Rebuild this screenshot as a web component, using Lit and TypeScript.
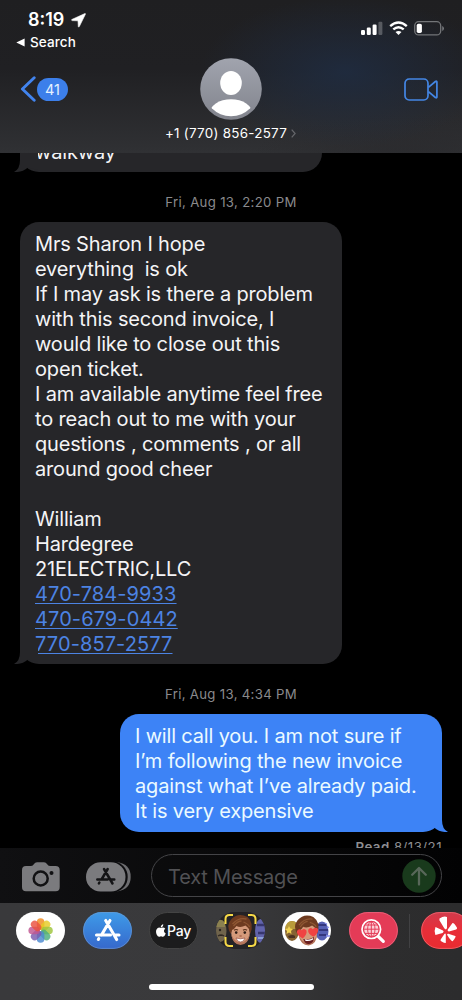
import { LitElement, html, svg, css } from "lit";
import { customElement, property } from "lit/decorators.js";

type Line = { text: string; link?: boolean };

@customElement("status-header")
class StatusHeader extends LitElement {
  static styles = css`
    :host { display: block; height: 153px; color: #fff; overflow: hidden;
      background:
        radial-gradient(ellipse 145px 75px at 345px 72px, rgba(31, 46, 70, .75), rgba(31, 46, 70, 0)),
        radial-gradient(ellipse 150px 50px at 400px 160px, rgba(40, 40, 43, .7), rgba(40, 40, 43, 0)),
        linear-gradient(180deg, #1f1f21 0, #202023 45%, #303134 100%); }
    .status { display: flex; justify-content: space-between; height: 32px; padding: 8px 17px 0 28px; box-sizing: border-box; }
    .time { display: flex; align-items: center; gap: 7px; font-size: 18px; font-weight: 600; line-height: 24px; letter-spacing: 0; }
    .right { display: flex; align-items: center; gap: 6px; padding-top: 16px; height: 8px; }
    .back { display: flex; align-items: center; gap: 5px; height: 20px; padding-left: 16px; font-size: 13.5px; font-weight: 500; letter-spacing: .1px; }
    .nav { display: grid; grid-template-columns: 90px 1fr 90px; height: 62px; margin-top: 6px; align-items: center; justify-items: center; }
    .unread { display: flex; align-items: center; gap: 1px; justify-self: start; padding-left: 20px; }
    .count { width: 31px; height: 23px; border-radius: 12px; background: #3c7fea; font-size: 14.5px; line-height: 24px; text-align: center; color: #e4f2ff; }
    .video { justify-self: end; padding-right: 24px; }
    .who { display: flex; align-items: center; justify-content: center; gap: 4px; height: 20px; margin-top: 3px; padding-right: 1px; font-size: 13.4px; letter-spacing: .28px; }
    svg { display: block; }
  `;
  render() {
    return html`
      <div class="status">
        <div class="time">8:19
          <svg width="15" height="15" viewBox="0 0 15 15"><path d="M14 .5 .8 6.5Q.2 7.3 1.2 7.6L7 7.8 7.3 13.5Q7.6 14.6 8.3 13.6L14.4 1.2Q14.6.4 14 .5Z" fill="#fff" stroke="#fff" stroke-width=".6"/></svg>
        </div>
        <div class="right">
          <svg width="22" height="14" viewBox="0 0 22 14"><g fill="#fff"><rect x="0" y="9" width="4" height="5" rx="1.2"/><rect x="5.8" y="6.5" width="4" height="7.5" rx="1.2"/><rect x="11.6" y="3.5" width="4" height="10.5" rx="1.2"/><rect x="17.4" y=".8" width="4" height="13.2" rx="1.2" opacity=".25"/></g></svg>
          <svg width="19" height="14" viewBox="0 0 19 14"><g fill="none" stroke="#fff" stroke-width="2.4"><path d="M1.2 5.2Q9.5-2 17.8 5.2"/><path d="M4.3 8.4Q9.5 4 14.7 8.4"/></g><path d="M6.5 11Q9.5 8.8 12.5 11L9.5 14Z" fill="#fff"/></svg>
          <svg width="31" height="15" viewBox="0 0 31 15"><rect x=".7" y=".7" width="26" height="13.2" rx="4" fill="none" stroke="#737578" stroke-width="1.3"/><rect x="2.7" y="2.7" width="5.2" height="9.2" rx="1.7" fill="#fff"/><path d="M28.3 5v5q1.6-.6 1.6-2.5T28.3 5Z" fill="#808286"/></svg>
        </div>
      </div>
      <div class="back"><svg width="9" height="9" viewBox="0 0 9 9"><path d="M.3 4.5 8.6.5v8Z" fill="#fff"/></svg>Search</div>
      <div class="nav">
        <div class="unread">
          <svg width="16" height="26" viewBox="0 0 16 26"><path d="M14.2 1.7 2.4 13 14.2 24.3" fill="none" stroke="#4284ee" stroke-width="2.9" stroke-linecap="round" stroke-linejoin="round"/></svg>
          <div class="count">41</div>
        </div>
        <svg width="62" height="62" viewBox="0 0 62 62">
          <defs><linearGradient id="g" x2="0" y2="1"><stop stop-color="#a1a4ae"/><stop offset="1" stop-color="#82848d"/></linearGradient><clipPath id="c"><circle cx="31" cy="31" r="27.2"/></clipPath></defs>
          <circle cx="31" cy="31" r="30.8" fill="url(#g)"/>
          <ellipse cx="31" cy="25" rx="10.8" ry="12" fill="#fff"/><ellipse cx="31" cy="56" rx="21.5" ry="14.8" fill="#fff" clip-path="url(#c)"/>
        </svg>
        <svg class="video" width="34" height="23" viewBox="0 0 34 23"><g fill="none" stroke="#4487e5" stroke-width="1.7" stroke-linejoin="round"><rect x="1" y="1" width="23" height="21" rx="4.2"/><path d="M24.4 9.3 31.4 3.5Q32.9 2.7 32.9 4v15q0 1.3-1.5.5L24.4 13.7"/></g></svg>
      </div>
      <div class="who">+1 (770) 856-2577<svg width="5" height="9" viewBox="0 0 5 9"><path d="m.7.7 3.4 3.8L.7 8.3" fill="none" stroke="#66676b" stroke-width="1.2"/></svg></div>
    `;
  }
}

@customElement("chat-bubble")
class ChatBubble extends LitElement {
  @property({ attribute: false }) lines: Line[] = [];
  @property({ type: Boolean, reflect: true }) sent = false;
  static styles = css`
    :host { display: block; position: relative; box-sizing: border-box; width: 322px; margin-left: 20px; padding: 10px 15px 7px; border-radius: 19px; background: #262629; color: #f4f4f6; font-size: 20px; line-height: 25px; }
    :host([sent]) { margin-left: 120px; padding-bottom: 8px; background: #3d83f6; color: #ebfaff; }
    .line { height: 25px; white-space: pre; letter-spacing: -.17px; }
    .link { color: #4c83e3; letter-spacing: .1px; text-decoration: underline; text-decoration-thickness: 1.4px; text-underline-offset: 2px; text-decoration-skip-ink: none; }
    .tail { position: absolute; left: -6px; bottom: 0; fill: #262629; }
    :host([sent]) .tail { left: auto; right: -6px; fill: #3d83f6; transform: scaleX(-1); }
  `;
  render() {
    return html`<svg class="tail" width="26" height="22" viewBox="0 0 26 22"><path d="M6 0V10Q6 19 0 22 8 22.6 14 17.5L24 20V0Z"/></svg>
    ${this.lines.map(l => html`<div class="line"><span class=${l.link ? "link" : ""}>${l.text}</span></div>`)}`;
  }
}

@customElement("compose-bar")
class ComposeBar extends LitElement {
  static styles = css`
    :host { display: flex; align-items: center; height: 55px; box-sizing: border-box; padding: 0 20px 0 22px; background: linear-gradient(90deg, #101012, #09090a 50%, #020203); }
    svg { display: block; }
    .camera, .cards { margin-top: 2px; }
    .cards { margin-left: 26px; }
    .field { display: flex; align-items: center; justify-content: space-between; box-sizing: border-box; width: 291px; height: 43px; margin-left: auto; padding: 2px 5px 0 16px; border: 1.3px solid #444447; border-radius: 22px; color: #515154; font-size: 20px; letter-spacing: -.2px; }
    .send { margin-top: -1px; }
  `;
  render() {
    return html`
      <svg class="camera" width="38" height="30" viewBox="0 0 38 30"><path d="M4 4h5q2 0 3-2 1-1.8 3-1.8h7q2 0 3 1.8 1 2 3 2h5.5Q37.7 4 37.7 8v17q0 4.3-4 4.3H4Q0 29.3 0 25V8Q0 4 4 4Z" fill="#7b7b7e"/><circle cx="18.7" cy="16.5" r="7" fill="none" stroke="#111113" stroke-width="2.5"/><circle cx="29.5" cy="11" r="2" fill="#111113"/></svg>
      <svg class="cards" width="45" height="30" viewBox="0 0 45 30"><path d="M31 .3Q44.7 2 44.7 14.8T31 29.5Z" fill="#6d6d70"/><rect x="-.8" y="-.8" width="42.5" height="31.5" rx="15.7" fill="#0d0d0f"/><rect x="0" y=".3" width="39.5" height="29.3" rx="14.6" fill="#7b7b7e"/><g stroke="#141416" stroke-width="2.5" stroke-linecap="round" fill="none"><path d="m18 7 8.5 14.5M21.7 7l-6.2 10.5M11.3 17.5h10.4M25 17.5h3.3M13.4 20.5l-.5.9"/></g></svg>
      <div class="field"><span>Text Message</span>
        <svg class="send" width="34" height="34" viewBox="0 0 34 34"><circle cx="17" cy="17" r="16.7" fill="#193a1c"/><path d="M17 25.5V9.5M10.2 15.8 17 9l6.8 6.8" fill="none" stroke="#586759" stroke-width="2.3" stroke-linecap="round" stroke-linejoin="round"/></svg>
      </div>`;
  }
}

const petals = ["#f08b1d", "#e6cb24", "#9dc43c", "#4dae7d", "#4b89cf", "#7a5cae", "#c05590", "#ea5040"];

const face = (smile: boolean) => svg`
  <ellipse cx="0" cy="3" rx="9.3" ry="11" fill="#d59a7a"/>
  <path d="M-9.3 4Q-8 14.500 0 15 8 14.500 9.300 4 6 12.500 0 12.500T-9.300 4Z" fill="#b5745a"/>
  <path d="M-9.800 4Q-15-5-9-11-2-18 7-13 14-7 9.800 4L8.600-1Q7-3 5-4.500 0-2-4-4-6-1-8.500 0Z" fill="#6e3b20"/>
  <path d="M-8-6Q-2-13 6-11M-7-4Q-3-9 1-9M3-8Q8-6 9-3" stroke="#8f5733" stroke-width="1.3" fill="none"/>
  ${smile
    ? svg`<path d="M-6.500.200q2.200-1.500 4 0M2.500.200q2-1.500 4 0" stroke="#573019" fill="none" stroke-width="1.1"/><circle cx="-4.3" cy="2.6" r="1.3" fill="#2c1c16"/><circle cx="4.3" cy="2.6" r="1.3" fill="#2c1c16"/><path d="M-1 6h2.200" stroke="#a9644c" stroke-width="1.3"/><path d="M-4.500 8Q0 9.600 4.500 8 3.500 12 0 12T-4.500 8Z" fill="#fff" stroke="#8a3f35" stroke-width=".6"/>`
    : svg`<path d="M-5 8Q0 10 6 7 5 13.500.5 13.500T-5 8Z" fill="#6b1f20"/><path d="M-3.500 8.600Q1 10 5 8l-.5 1.700Q0 11-3 10Z" fill="#fff"/><path d="M-5.500 7.500Q-12 3-10.500-.5q2.200-3 4.700-.2Q-3-3.400-1 0-.5 4-5.500 7.500ZM5.500 6.800Q-.5 3 .8-.8q2.300-2.800 4.500 0 3-2.800 5.400.2Q11 3.500 5.500 6.800Z" fill="#f04342"/>`}`;

@customElement("app-drawer")
class AppDrawer extends LitElement {
  static styles = css`
    :host { display: block; height: 97px; overflow: hidden; background: linear-gradient(90deg, #39393b 0, #3a3a3c 50%, #2d2d2e 80%, #2c2c2d 100%); }
    .apps { display: flex; align-items: center; gap: 17.5px; height: 55px; padding-left: 16px; }
    .app { flex: none; width: 49px; height: 37px; border-radius: 18.5px; overflow: hidden; }
    .pay { display: flex; align-items: center; justify-content: center; box-sizing: border-box; gap: 1px; background: #1c1c1d; border: 1px solid #444; color: #fff; font-size: 14px; letter-spacing: -.3px; font-weight: 500; }
    .rule { flex: none; width: 1px; height: 34px; margin: 0 -6.5px; background: #414143; }
    .home { width: 165px; height: 6px; border-radius: 3px; background: #fff; margin: 26px 0 0 149px; }
    svg { display: block; }
  `;
  render() {
    return html`
      <div class="apps">
        <svg class="app" viewBox="0 0 49 37"><rect width="49" height="37" fill="#fff"/>
          ${petals.map((c, i) => svg`<rect x="20.8" y="6.3" width="7.6" height="11.6" rx="3.8" fill=${c} opacity=".82" transform="rotate(${i * 45} 24.6 18.5)"/>`)}</svg>
        <svg class="app" viewBox="0 0 49 37"><defs><linearGradient id="b" x2="0" y2="1"><stop stop-color="#3e9be8"/><stop offset="1" stop-color="#3668cc"/></linearGradient></defs><rect width="49" height="37" fill="url(#b)"/><rect x=".6" y=".6" width="47.8" height="35.8" rx="17.9" fill="none" stroke="#7499c8" stroke-opacity=".6"/><g stroke="#fff" stroke-width="3.1" stroke-linecap="round"><path d="m22.7 8.5 11 19M27 8.5 18.5 23M13.5 23h14M32.5 23H36M15.8 26.5l-.5.9"/></g></svg>
        <div class="app pay"><svg width="10" height="13" viewBox="0 0 20 25"><path d="M14.5 0q.2 3-1.7 4.800T9.500 6.300Q9.300 3.800 11 2T14.500 0ZM18.500 9q-3 1.800-2.600 5t3.600 4.300Q17 25 14 25q-1.300 0-2.500-.6-1.500-.7-3 0-1.300.6-2.300.6Q3.500 25 1.300 20.500-1 15 1 10.500 3 6.700 6.500 6.700q1.200 0 3.500 1 2-.9 3.700-1Q16.700 6.700 18.500 9Z" fill="#fff"/></svg>Pay</div>
        <svg class="app" viewBox="0 0 49 37"><rect width="49" height="37" fill="#252326"/>
          <ellipse cx="4.5" cy="19" rx="6" ry="11" fill="#70644c"/><path d="M0 10Q5 5 9 11v4H0Z" fill="#8b8150"/><circle cx="4" cy="18" r="1.2" fill="#28231f"/><path d="M2 24q3-2 6 0" stroke="#342b25" stroke-width="1.5"/>
          <ellipse cx="45" cy="19" rx="6" ry="12" fill="#6264ac"/><path d="M41 13h8M42 21h7" stroke="#37366e" stroke-width="2.5"/><path d="M42 26h7" stroke="#8ca0da" stroke-width="2"/>
          <g transform="translate(24.5 18)">${face(true)}</g>
          <path d="M9.500 12V7q0-4 4-4H17M32 3h3.500q4 0 4 4v5M9.500 25v5q0 4 4 4H17M32 34h3.500q4 0 4-4v-5" fill="none" stroke="#f5d847" stroke-width="2"/></svg>
        <svg class="app" viewBox="0 0 49 37"><rect width="49" height="37" fill="#fff"/>
          <ellipse cx="10" cy="19" rx="7" ry="10" fill="#856333"/><path d="M3 17Q4 9 10 9t8 8Z" fill="#b99b3b"/><path d="m7 14 1.300 2.500 2.700.5-2 2 .5 3-2.500-1.500L4.500 22l.5-3-2-2 2.800-.5Z" fill="#f1d251"/><path d="M6 24q5-2 7 0v2H7Z" fill="#4b3222"/>
          <ellipse cx="40" cy="19" rx="6.5" ry="9.5" fill="#5660b3"/><path d="M36 13h8M37 18h9M37 23h7" stroke="#34377e" stroke-width="1.8"/><path d="m43 11 2 1M45 16l2-1M44 24h4" stroke="#8b92ef" stroke-width="1.3"/>
          <g transform="translate(25.5 18.5) rotate(-5)">${face(false)}</g></svg>
        <svg class="app" viewBox="0 0 49 37"><rect width="49" height="37" fill="#e43b57"/><rect x=".6" y=".6" width="47.8" height="35.8" rx="17.9" fill="none" stroke="#eb7890" stroke-opacity=".6"/><g fill="none" stroke="#fff"><circle cx="22.3" cy="17.2" r="9.3" stroke-width="1.7"/><path d="m29.300 24.500 5 4.800" stroke-width="3.2" stroke-linecap="round"/><circle cx="22.3" cy="17.2" r="7.2" fill="#fbd0d7" stroke="none"/><path d="M22.300 9.500v15M15 17.200h15M16 13h13M16 21.400h13" stroke="#e43b57" stroke-width="1"/><ellipse cx="22.3" cy="17.2" rx="3.7" ry="7.4" stroke="#e43b57" stroke-width=".9"/></g></svg>
        <div class="rule"></div>
        <svg class="app" viewBox="0 0 49 37"><defs><linearGradient id="r" x2="0" y2="1"><stop stop-color="#d13a4c"/><stop offset=".5" stop-color="#e82e38"/><stop offset="1" stop-color="#e82b30"/></linearGradient></defs><rect width="49" height="37" fill="url(#r)"/><rect x=".6" y=".6" width="47.8" height="35.8" rx="17.9" fill="none" stroke="#f27b80" stroke-opacity=".6"/><path d="M18.500 6.500Q23 3.500 26 5v11q-.8 2.500-2.600.6l-5-8.400ZM14.500 15l7.500 3.500q1.500 1.500-.4 2.400l-7.200 2Q12.800 19 14.500 15ZM24.800 22.500v8.200q-.6 1.300-5-1.700-.7-.8.200-2l3.200-4.800q1.200-1.300 1.600.3ZM27.300 21.700l7 2.300q1.300.6-2.700 5.200-1.300.6-5.400-6.100-.5-1.500 1.100-1.400ZM26.800 17.500l4.500-6.200q1.200-1.100 4.600 4.300.6 1.400-.8 1.800L28 19.600q-2-.3-1.200-2.100Z" fill="#fff"/></svg>
      </div>
      <div class="home"></div>`;
  }
}

@customElement("app-root")
class AppRoot extends LitElement {
  static styles = css`
    :host { display: grid; grid-template-rows: 153px 695px 55px 97px; width: 462px; height: 1000px; overflow: hidden; background: #000; font-family: Inter, "Liberation Sans", sans-serif; }
    .thread { overflow: hidden; }
    .previous { width: 302px; margin-top: -23px; }
    .stamp { height: 50px; box-sizing: border-box; padding-top: 20px; text-align: center; color: #8a8a8d; font-size: 13.2px; line-height: 20px; letter-spacing: .32px; }
    .read { padding: 6px 20px 0 0; text-align: right; font-size: 13.3px; line-height: 18px; letter-spacing: .45px; color: #8e8e91; }
    .read b { font-weight: 600; }
  `;
  private first: Line[] = [{ text: "walkway" }];
  private received: Line[] = [
    { text: "Mrs Sharon I hope" }, { text: "everything  is ok" },
    { text: "If I may ask is there a problem" }, { text: "with this second invoice, I" },
    { text: "would like to close out this" }, { text: "open ticket." },
    { text: "I am available anytime feel free" }, { text: "to reach out to me with your" },
    { text: "questions , comments , or all" }, { text: "around good cheer" }, { text: "" },
    { text: "William" }, { text: "Hardegree" }, { text: "21ELECTRIC,LLC" },
    { text: "470-784-9933", link: true }, { text: "470-679-0442", link: true }, { text: "770-857-2577", link: true },
  ];
  private reply: Line[] = [
    { text: "I will call you. I am not sure if" }, { text: "I’m following the new invoice" },
    { text: "against what I’ve already paid." }, { text: "It is very expensive" },
  ];
  render() {
    return html`
      <status-header></status-header>
      <div class="thread">
        <chat-bubble class="previous" .lines=${this.first}></chat-bubble>
        <div class="stamp">Fri, Aug 13, 2:20 PM</div>
        <chat-bubble .lines=${this.received}></chat-bubble>
        <div class="stamp">Fri, Aug 13, 4:34 PM</div>
        <chat-bubble sent .lines=${this.reply}></chat-bubble>
        <div class="read"><b>Read</b> 8/13/21</div>
      </div>
      <compose-bar></compose-bar>
      <app-drawer></app-drawer>`;
  }
}
